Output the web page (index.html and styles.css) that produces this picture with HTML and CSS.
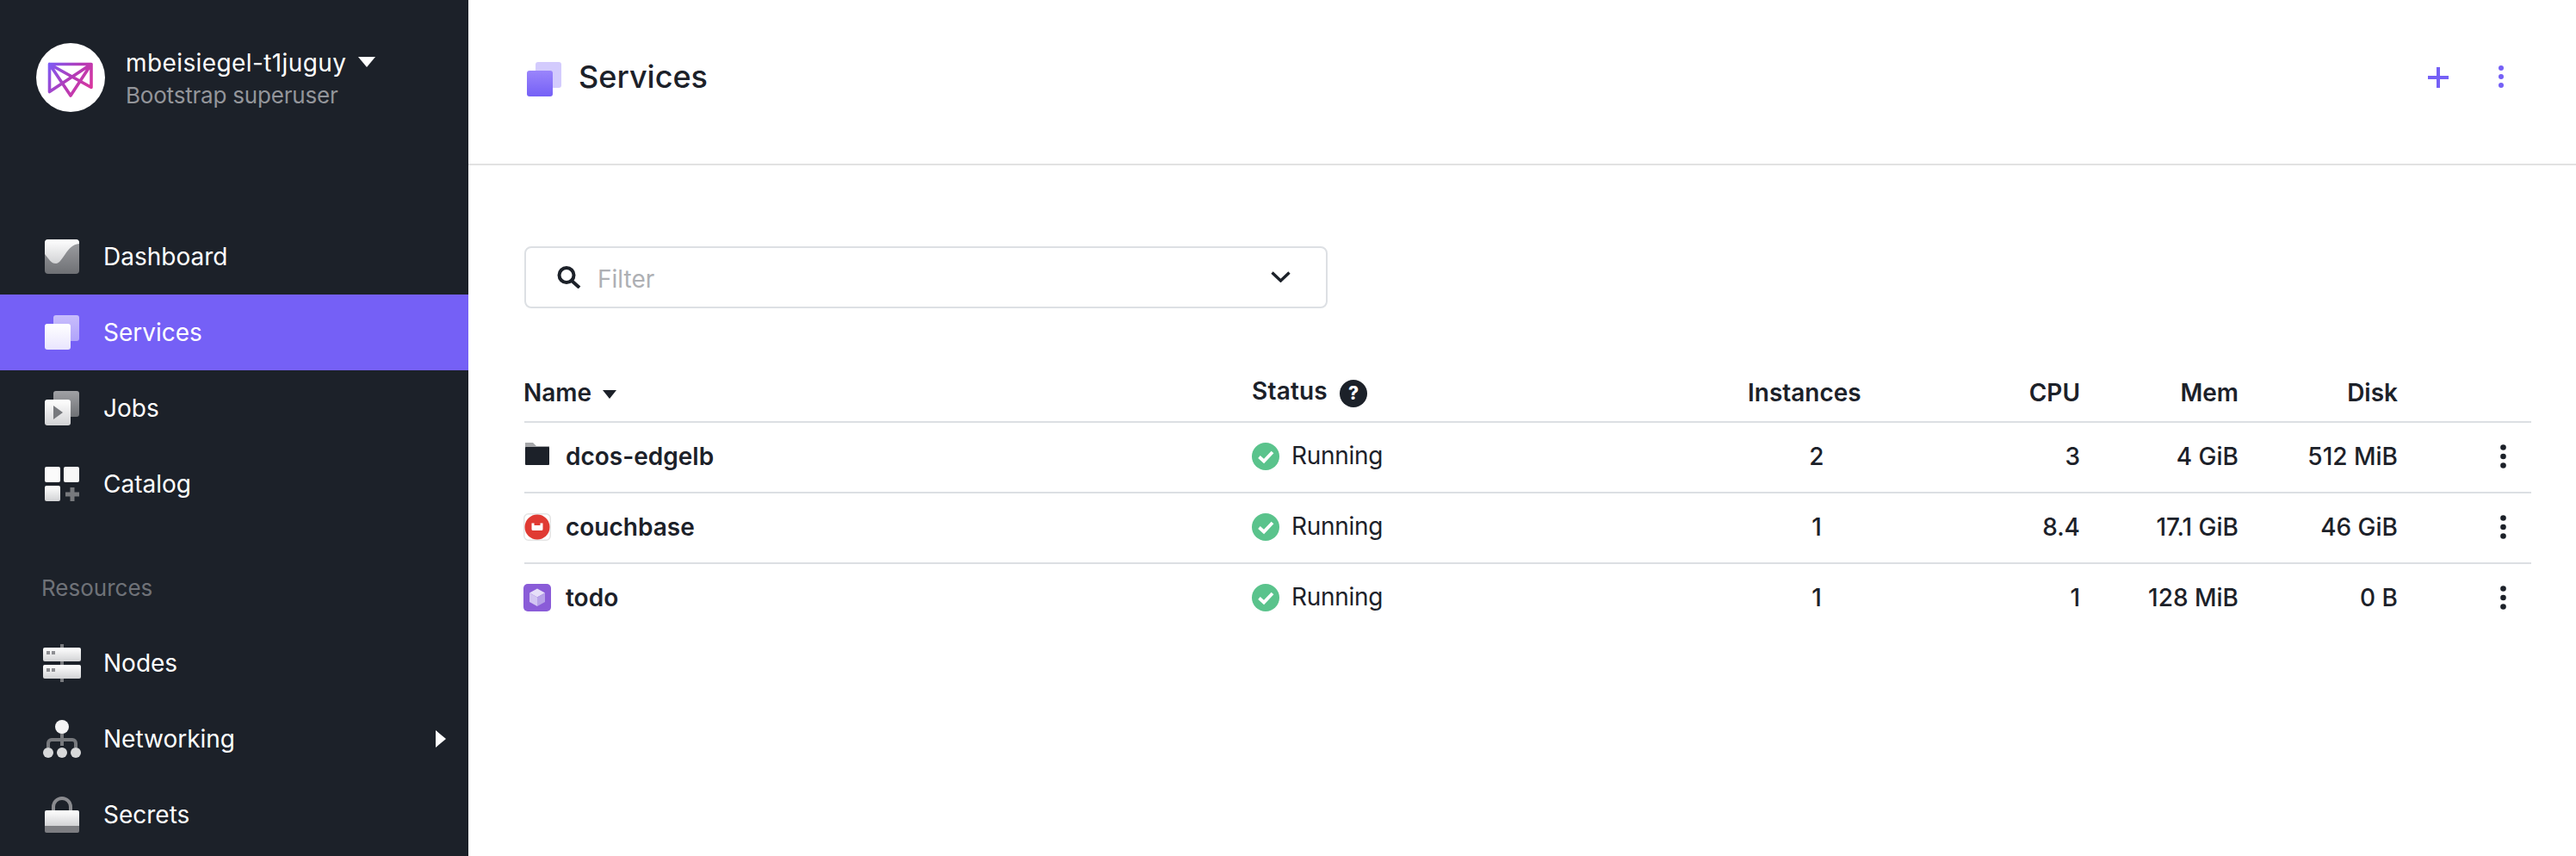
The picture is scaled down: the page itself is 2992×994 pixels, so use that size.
FILE: index.html
```html
<!DOCTYPE html>
<html lang="en">
<head>
<meta charset="utf-8">
<title>Services</title>
<link rel="stylesheet" href="styles.css">
</head>
<body>
<svg class="defs" width="0" height="0" aria-hidden="true">
  <defs>
    <linearGradient id="lightGrad" x1="0" y1="0" x2="0" y2="1"><stop offset="0" stop-color="#ffffff"/><stop offset="1" stop-color="#d2d3d5"/></linearGradient>
    <linearGradient id="greyGrad" x1="0" y1="0" x2="0" y2="1"><stop offset="0" stop-color="#a0a1a5"/><stop offset="1" stop-color="#6f7175"/></linearGradient>
    <linearGradient id="whiteGrad" x1="0" y1="0" x2="0" y2="1"><stop offset="0" stop-color="#ffffff"/><stop offset="1" stop-color="#e9e5fe"/></linearGradient>
    <linearGradient id="lilacGrad" x1="0" y1="0" x2="0" y2="1"><stop offset="0" stop-color="#c8bdfc"/><stop offset="1" stop-color="#b0a3fa"/></linearGradient>
    <linearGradient id="purpleGrad" x1="0" y1="0" x2="0" y2="1"><stop offset="0" stop-color="#9a85fb"/><stop offset="1" stop-color="#7560f6"/></linearGradient>
    <linearGradient id="logoGrad" gradientUnits="userSpaceOnUse" x1="15" y1="23" x2="65" y2="58"><stop offset="0" stop-color="#7d5cf6"/><stop offset=".5" stop-color="#b23cb8"/><stop offset="1" stop-color="#e0359a"/></linearGradient>
    <symbol id="check" viewBox="0 0 32 32">
      <circle cx="16" cy="16" r="16" fill="#5ac38c"/>
      <path d="M8.5 16.5l5.5 5L24 11" fill="none" stroke="#fff" stroke-width="3.8"/>
    </symbol>
    <symbol id="kebab" viewBox="0 0 7 28">
      <circle cx="3.5" cy="3.5" r="3.3" fill="#1c2129"/>
      <circle cx="3.5" cy="14" r="3.3" fill="#1c2129"/>
      <circle cx="3.5" cy="24.5" r="3.3" fill="#1c2129"/>
    </symbol>
  </defs>
</svg>

<div class="app">
  <aside class="sidebar">
    <div class="account">
      <div class="avatar">
        <svg width="80" height="80" viewBox="0 0 80 80"><path d="M15.5 24.5H64V51.5L15.5 24.5L40 61L64 24.5L15.5 56.5Z" fill="none" stroke="url(#logoGrad)" stroke-width="3.6" stroke-linejoin="round"/></svg>
      </div>
      <div class="account-text">
        <div class="account-name">mbeisiegel-t1juguy<svg class="account-caret" width="20" height="12" viewBox="0 0 20 12"><path d="M0 0H20L10 12Z" fill="#fff"/></svg></div>
        <div class="account-role">Bootstrap superuser</div>
      </div>
    </div>

    <nav class="nav-group">
      <a class="nav-item">
        <span class="nav-icon">
          <svg width="40" height="40" viewBox="0 0 40 40">
            <rect width="40" height="40" rx="4" fill="url(#greyGrad)"/>
            <path d="M0 17C5 23 7 28 13 28C21 28 25 6 40 5V4A4 4 0 0 0 36 0H4A4 4 0 0 0 0 4Z" fill="url(#lightGrad)"/>
          </svg>
        </span>
        <span>Dashboard</span>
      </a>
      <a class="nav-item nav-item-active">
        <span class="nav-icon">
          <svg width="40" height="40" viewBox="0 0 40 40">
            <rect x="10" width="30" height="30" rx="3" fill="url(#lilacGrad)"/>
            <rect y="10" width="30" height="30" rx="3" fill="url(#whiteGrad)"/>
          </svg>
        </span>
        <span>Services</span>
      </a>
      <a class="nav-item">
        <span class="nav-icon">
          <svg width="40" height="40" viewBox="0 0 40 40">
            <rect x="10" width="30" height="30" rx="3" fill="url(#greyGrad)"/>
            <rect y="10" width="30" height="30" rx="3" fill="url(#lightGrad)"/>
            <path d="M10 17V33L21 25Z" fill="#77797d"/>
          </svg>
        </span>
        <span>Jobs</span>
      </a>
      <a class="nav-item">
        <span class="nav-icon">
          <svg width="40" height="40" viewBox="0 0 40 40">
            <rect width="18" height="18" rx="2" fill="#fbfbfb"/>
            <rect x="22" width="18" height="18" rx="2" fill="#f8f8f8"/>
            <rect y="22" width="18" height="18" rx="2" fill="url(#lightGrad)"/>
            <path d="M24 32H40M32 24V40" stroke="#77797d" stroke-width="5"/>
          </svg>
        </span>
        <span>Catalog</span>
      </a>
    </nav>

    <div class="nav-label">Resources</div>

    <nav class="nav-group">
      <a class="nav-item">
        <span class="nav-icon nav-icon-wide">
          <svg width="44" height="44" viewBox="0 0 44 44">
            <rect x="20" width="4" height="44" fill="#77797d"/>
            <rect y="4" width="44" height="16" rx="2" fill="url(#lightGrad)"/>
            <rect y="24" width="44" height="16" rx="2" fill="url(#lightGrad)"/>
            <path d="M4 8h4v4H4zM10 8h4v4h-4zM4 28h4v4H4zM10 28h4v4h-4z" fill="#8d8e92"/>
          </svg>
        </span>
        <span>Nodes</span>
      </a>
      <a class="nav-item">
        <span class="nav-icon nav-icon-wide">
          <svg width="44" height="44" viewBox="0 0 44 44">
            <path d="M22 12V30M6 32V27A4 4 0 0 1 10 23H34A4 4 0 0 1 38 27V32" fill="none" stroke="#77797d" stroke-width="4"/>
            <circle cx="22" cy="8" r="8" fill="#f4f4f5"/>
            <circle cx="6" cy="38" r="6" fill="#d8d9da"/>
            <circle cx="22" cy="38" r="6" fill="#d8d9da"/>
            <circle cx="38" cy="38" r="6" fill="#d8d9da"/>
          </svg>
        </span>
        <span>Networking</span>
        <svg class="nav-chevron" width="12" height="20" viewBox="0 0 12 20"><path d="M0 0L12 10L0 20Z" fill="#fff"/></svg>
      </a>
      <a class="nav-item">
        <span class="nav-icon">
          <svg width="40" height="42" viewBox="0 0 40 42">
            <path d="M10 18V12A10 10 0 0 1 30 12V18" fill="none" stroke="#8a8b8f" stroke-width="4"/>
            <path d="M2 16H38A2 2 0 0 1 40 18V34H0V18A2 2 0 0 1 2 16Z" fill="url(#lightGrad)"/>
            <path d="M0 34H40V40A2 2 0 0 1 38 42H2A2 2 0 0 1 0 40Z" fill="#7d7e82"/>
          </svg>
        </span>
        <span>Secrets</span>
      </a>
    </nav>
  </aside>

  <main class="main">
    <header class="page-header">
      <svg class="page-icon" width="40" height="40" viewBox="0 0 40 40">
        <rect x="10" width="30" height="30" rx="3" fill="#d3cbfd"/>
        <rect y="10" width="30" height="30" rx="3" fill="url(#purpleGrad)"/>
      </svg>
      <h1 class="page-title">Services</h1>
      <div class="page-actions">
        <svg class="action-plus" width="24" height="24" viewBox="0 0 24 24"><path d="M0 12H24M12 0V24" stroke="#7560f6" stroke-width="4"/></svg>
        <svg class="action-more" width="6" height="26" viewBox="0 0 6 26"><circle cx="3" cy="3" r="3" fill="#7560f6"/><circle cx="3" cy="13" r="3" fill="#7560f6"/><circle cx="3" cy="23" r="3" fill="#7560f6"/></svg>
      </div>
    </header>

    <section class="content">
      <div class="filter">
        <svg class="filter-search" width="28" height="26" viewBox="0 0 28 26"><circle cx="11" cy="10.5" r="8.5" fill="none" stroke="#1c2129" stroke-width="4"/><path d="M17 17L26 25" stroke="#1c2129" stroke-width="4"/></svg>
        <span class="filter-text">Filter</span>
        <svg class="filter-chevron" width="23" height="13" viewBox="0 0 23 13"><path d="M1.5 1.5L11.5 11L21.5 1.5" fill="none" stroke="#1c2129" stroke-width="3.4"/></svg>
      </div>

      <table class="services">
        <colgroup>
          <col class="col-name"><col class="col-status"><col class="col-inst"><col class="col-cpu"><col class="col-mem"><col class="col-disk"><col class="col-act">
        </colgroup>
        <thead>
          <tr>
            <th><span class="th-name">Name<svg class="sort-caret" width="16" height="10" viewBox="0 0 16 10"><path d="M0 0H16L8 10Z" fill="#1c2129"/></svg></span></th>
            <th class="th-status"><span class="status-head"><span class="status-head-text">Status</span><span class="help">?</span></span></th>
            <th>Instances</th>
            <th class="num">CPU</th>
            <th class="num">Mem</th>
            <th class="num">Disk</th>
            <th></th>
          </tr>
        </thead>
        <tbody>
          <tr>
            <td><span class="svc">
              <span class="svc-icon"><svg width="32" height="32" viewBox="0 0 32 32"><path d="M2 0H11L15 4H30V8H2Z" fill="#a6a7aa"/><path d="M3 5H29A1 1 0 0 1 30 6V25A1 1 0 0 1 29 26H3A1 1 0 0 1 2 25V6A1 1 0 0 1 3 5Z" fill="#1c2129"/></svg></span>
              <span>dcos-edgelb</span></span></td>
            <td><span class="state"><svg width="32" height="32"><use href="#check"/></svg><span class="state-text">Running</span></span></td>
            <td class="inst">2</td>
            <td class="num">3</td>
            <td class="num">4 GiB</td>
            <td class="num">512 MiB</td>
            <td class="act"><svg width="7" height="28"><use href="#kebab"/></svg></td>
          </tr>
          <tr>
            <td><span class="svc">
              <span class="svc-icon"><svg width="32" height="32" viewBox="0 0 32 32"><rect x=".75" y=".75" width="30.5" height="30.5" rx="5" fill="#fff" stroke="#e4e4e4" stroke-width="1.5"/><circle cx="16" cy="16" r="14.5" fill="#e03a33"/><path d="M9.5 11.5H12.5V14H19.5V11.5H22.5V18.5A1.5 1.5 0 0 1 21 20H11A1.5 1.5 0 0 1 9.5 18.5Z" fill="#fff"/></svg></span>
              <span>couchbase</span></span></td>
            <td><span class="state"><svg width="32" height="32"><use href="#check"/></svg><span class="state-text">Running</span></span></td>
            <td class="inst">1</td>
            <td class="num">8.4</td>
            <td class="num">17.1 GiB</td>
            <td class="num">46 GiB</td>
            <td class="act"><svg width="7" height="28"><use href="#kebab"/></svg></td>
          </tr>
          <tr>
            <td><span class="svc">
              <span class="svc-icon"><svg width="32" height="32" viewBox="0 0 32 32"><rect width="32" height="32" rx="5" fill="#8a5cd8"/><path d="M16 5.5L25 10.5L16 15.5L7 10.5Z" fill="#e6dff8"/><path d="M7 10.5L16 15.5V26L7 21Z" fill="#d2c5f2"/><path d="M25 10.5L16 15.5V26L25 21Z" fill="#b7a2e8"/></svg></span>
              <span>todo</span></span></td>
            <td><span class="state"><svg width="32" height="32"><use href="#check"/></svg><span class="state-text">Running</span></span></td>
            <td class="inst">1</td>
            <td class="num">1</td>
            <td class="num">128 MiB</td>
            <td class="num">0 B</td>
            <td class="act"><svg width="7" height="28"><use href="#kebab"/></svg></td>
          </tr>
        </tbody>
      </table>
    </section>
  </main>
</div>
</body>
</html>
```

FILE: styles.css
```css
* { box-sizing: border-box; }
html, body { margin: 0; height: 100%; }
body {
  font-family: Inter, "Liberation Sans", sans-serif;
  font-size: 28px;
  color: #1c2129;
  background: #fff;
  overflow: hidden;
}
.defs { display: block; width: 0; height: 0; }
.app { display: flex; height: 994px; overflow: hidden; }

/* Sidebar */
.sidebar {
  flex: 0 0 544px;
  height: 994px;
  background: #1c2129;
  color: #fff;
  overflow: hidden;
}
.account {
  display: flex;
  align-items: flex-start;
  gap: 24px;
  height: 254px;
  padding: 50px 0 0 42px;
}
.avatar {
  width: 80px;
  height: 80px;
  border-radius: 50%;
  background: #fff;
  flex: none;
}
.avatar svg { display: block; }
.account-text { padding-top: 5px; }
.account-name {
  display: flex;
  align-items: center;
  line-height: 36px;
  font-size: 28px;
  letter-spacing: .4px;
}
.account-caret { margin-left: 14px; margin-top: -3px; }
.account-role {
  font-size: 26px;
  line-height: 36px;
  margin-top: 2px;
  letter-spacing: -.2px;
  color: #93959a;
}
.nav-item {
  display: flex;
  align-items: center;
  height: 88px;
  padding-left: 52px;
  color: #fff;
  font-size: 28px;
}
.nav-item-active { background: #7560f6; }
.nav-icon {
  display: flex;
  flex: none;
  width: 40px;
  margin-right: 28px;
}
.nav-icon-wide { width: 44px; margin-left: -2px; margin-right: 26px; }
.nav-icon svg { display: block; }
.nav-chevron { margin-left: auto; margin-right: 26px; }
.nav-label {
  height: 120px;
  padding: 60px 0 0 48px;
  font-size: 26px;
  line-height: 34px;
  color: #6f7278;
}

/* Main */
.main { flex: 1; min-width: 0; }
.page-header {
  display: flex;
  align-items: flex-start;
  height: 192px;
  padding: 72px 84px 0 68px;
  border-bottom: 2px solid #e2e2e2;
}
.page-icon { flex: none; }
.page-title {
  margin: 0 0 0 20px;
  font-size: 36px;
  font-weight: 500;
  line-height: 35px;
}
.page-actions {
  display: flex;
  align-items: flex-start;
  gap: 58px;
  margin-left: auto;
}
.action-plus { margin-top: 6px; }
.action-more { margin-top: 4px; }

.content { padding: 94px 52px 0 65px; }
.filter {
  display: flex;
  align-items: center;
  width: 933px;
  height: 72px;
  padding: 0 41px 0 36px;
  border: 2px solid #dde0e4;
  border-radius: 8px;
}
.filter-text { margin-left: 19px; margin-top: 3px; color: #aeb0b4; line-height: 30px; }
.filter-chevron { margin-left: auto; margin-top: -1px; }

/* Table */
.services {
  width: 2331px;
  margin-top: 60px;
  border-collapse: separate;
  border-spacing: 0;
  table-layout: fixed;
}
.col-name { width: 846px; }
.col-status { width: 575px; }
.col-inst { width: 131px; }
.col-cpu { width: 255px; }
.col-mem { width: 184px; }
.col-disk { width: 185px; }
.col-act { width: 155px; }
th {
  height: 71px;
  padding: 0 0 16px;
  vertical-align: bottom;
  text-align: left;
  font-weight: 600;
  line-height: 34px;
}
.th-status { padding-bottom: 14px; }
.th-name { display: inline-flex; align-items: center; margin-left: -1px; }
.sort-caret { margin-left: 13px; margin-top: 4px; }
.status-head { display: flex; align-items: center; margin-left: -1px; }
.status-head-text { width: 94px; line-height: 32px; margin-bottom: 5px; letter-spacing: .2px; }
.help {
  display: flex;
  align-items: center;
  justify-content: center;
  width: 32px;
  height: 32px;
  margin-left: 8px;
  border-radius: 50%;
  background: #1c2129;
  color: #fff;
  font-size: 21px;
  font-weight: 800;
}
td {
  height: 82px;
  padding: 0 0 2px;
  border-top: 2px solid #dcdfe3;
  font-weight: 500;
  vertical-align: middle;
}
.num { text-align: right; }
.inst { text-align: center; padding-left: 29px; }
.act { padding-left: 119px; }
.act svg { display: block; }
.svc { display: flex; align-items: center; gap: 17px; font-weight: 600; line-height: 34px; }
.svc-icon { display: flex; flex: none; margin-left: -1px; }
.svc-icon svg { display: block; }
.state { display: flex; align-items: center; gap: 14px; margin-left: -1px; font-weight: 400; }
.state-text { line-height: 32px; margin-bottom: 3px; letter-spacing: -.3px; }
```
